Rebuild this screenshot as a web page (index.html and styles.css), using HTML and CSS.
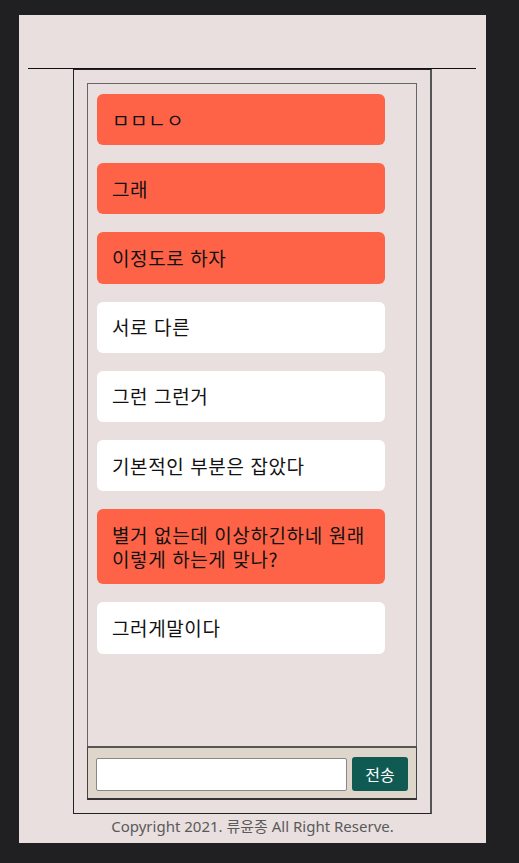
FILE: index.html
```html
<!DOCTYPE html>
<html lang="ko">
<head>
  <meta charset="UTF-8">
  <title>채팅</title>
  <link rel="stylesheet" href="styles.css">
</head>
<body>

<div class="page">
  <div class="header"></div>

  <div class="chat-wrap">
    <!-- 메시지 목록 -->
    <div class="chat-list">
      <div class="msg mine">ㅁㅁㄴㅇ</div>
      <div class="msg mine">그래</div>
      <div class="msg mine">이정도로 하자</div>
      <div class="msg other">서로 다른</div>
      <div class="msg other">그런 그런거</div>
      <div class="msg other">기본적인 부분은 잡았다</div>
      <div class="msg mine">별거 없는데 이상하긴하네 원래 이렇게 하는게 맞나?</div>
      <div class="msg other">그러게말이다</div>
    </div>

    <!-- 입력창 -->
    <div class="send-bar">
      <input type="text" class="send-input">
      <button class="send-btn">전송</button>
    </div>
  </div>

  <div class="footer">Copyright 2021. 류윤종 All Right Reserve.</div>
</div>

</body>
</html>
```

FILE: styles.css
```css
body {
  margin: 0;
  padding: 15px 33px 20px 19px;
  background: #202022;
  font-family: 'Noto Sans', 'Noto Sans CJK KR', sans-serif;
}
.page {
  width: 467px;
  height: 828px;
  background: #e9dfdf;
  box-sizing: border-box;
}
.header {
  height: 53px;
  margin: 0 10px 0 9px;
  border-bottom: 1px solid #111;
}
.chat-wrap {
  width: 359px;
  height: 745px;
  margin-left: 54px;
  padding: 13px;
  box-sizing: border-box;
  border: 1px solid #222;
  border-right: 2px solid #555;
}
.chat-list {
  height: 663px;
  box-sizing: border-box;
  border: 1px solid #666;
  border-bottom: none;
  padding: 10px 9px;
  display: flex;
  flex-direction: column;
  gap: 18px;
  overflow: hidden;
}
.msg {
  width: 288px;
  box-sizing: border-box;
  padding: 13.6px 15px;
  border-radius: 6px;
  font-size: 19px;
  line-height: 24px;
  letter-spacing: 0.6px;
  word-break: keep-all;
  color: #111;
  font-family: 'Noto Sans CJK KR', sans-serif;
}
.mine {
  background: #ff6347;
}
.other {
  background: #fff;
}
.send-bar {
  height: 54px;
  box-sizing: border-box;
  background: #ded6ca;
  border-top: 2px solid #555;
  border-left: 1px solid #444;
  border-right: 1px solid #444;
  border-bottom: 2px solid #333;
  padding: 9px 8px 0 8px;
  display: flex;
  gap: 5px;
}
.send-input {
  width: 251px;
  height: 33px;
  margin-top: 1px;
  box-sizing: border-box;
  border: 1px solid #888;
  border-radius: 2px;
  background: #fff;
}
.send-btn {
  width: 56px;
  height: 34px;
  border: none;
  border-radius: 3px;
  background: #0f5a52;
  color: #fff;
  font-size: 16px;
  font-family: 'Noto Sans CJK KR', sans-serif;
}
.footer {
  margin-top: 2px;
  text-align: center;
  font-size: 15px;
  line-height: 20px;
  color: #5a5a5a;
}
```
